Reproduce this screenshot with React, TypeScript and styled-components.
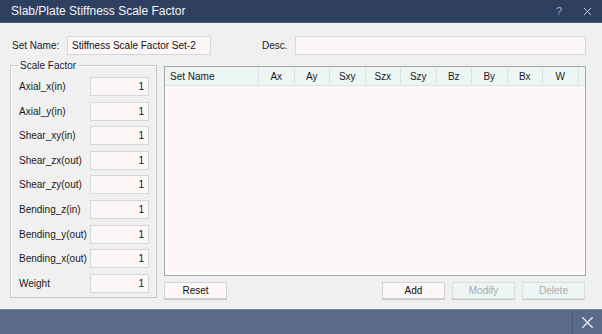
import styled, { createGlobalStyle } from 'styled-components'

const GlobalStyle = createGlobalStyle`
  html, body {
    margin: 0;
    padding: 0;
    background: #f0f0f0;
  }
  body {
    font-family: "Liberation Sans", Arial, sans-serif;
    font-size: 10px;
    color: #1a1a1a;
  }
`

const Window = styled.div`
  width: 602px;
  height: 334px;
  display: flex;
  flex-direction: column;
  background: #f0f0f0;
  overflow: hidden;
`

const TitleBar = styled.div`
  height: 23px;
  flex: none;
  display: flex;
  align-items: center;
  background: #2f3f5f;
  color: #f4f6fa;
  padding-left: 11px;
  font-size: 12px;
  border-bottom: 1px solid #4a5a78;
  box-sizing: border-box;
`

const Title = styled.div`
  flex: 1;
`

const TitleButton = styled.div<{ $w: number }>`
  width: ${(p) => p.$w}px;
  display: flex;
  justify-content: center;
  align-items: center;
  color: #a8b2c4;
  font-size: 11px;
`

const Body = styled.div`
  flex: 1;
  display: flex;
  flex-direction: column;
  padding: 12px 16px 0 12px;
`

const TopRow = styled.div`
  display: flex;
  align-items: center;
  height: 20px;
`

const Label = styled.span<{ $w?: number; $ml?: number }>`
  width: ${(p) => (p.$w ? `${p.$w}px` : 'auto')};
  margin-left: ${(p) => p.$ml || 0}px;
  flex: none;
  white-space: nowrap;
`

const TextBox = styled.div<{ $w?: number; $align?: string }>`
  height: 19px;
  box-sizing: border-box;
  width: ${(p) => (p.$w ? `${p.$w}px` : 'auto')};
  flex: ${(p) => (p.$w ? 'none' : '1')};
  background: #fdf6f6;
  border: 1px solid #d4d8dc;
  display: flex;
  align-items: center;
  justify-content: ${(p) => p.$align || 'flex-start'};
  padding: 0 4px;
  color: #111;
  white-space: nowrap;
`

const Main = styled.div`
  display: flex;
  margin-top: 10px;
  gap: 7px;
`

const FieldSet = styled.fieldset`
  width: 147px;
  height: 238px;
  box-sizing: border-box;
  margin: -5px 0 0 -2px;
  padding: 6px 7px 0 8px;
  border: 1px solid #c4c8cc;
  box-shadow: inset 1px 1px 0 #fff;
  display: flex;
  flex-direction: column;
  gap: 5.6px;
`

const Legend = styled.legend`
  padding: 0 2px;
  margin-left: -1px;
  color: #1a1a1a;
`

const FactorRow = styled.div`
  display: flex;
  align-items: center;
  height: 19px;
`

const RightCol = styled.div`
  flex: 1;
  display: flex;
  flex-direction: column;
  margin-top: 1px;
`

const Table = styled.div`
  height: 210px;
  box-sizing: border-box;
  border: 1px solid #a4a8ac;
  background: #fdf7f7;
`

const HeaderRow = styled.div`
  display: flex;
  height: 18px;
  background: #eef6f5;
  border-bottom: 1px solid #dde4e4;
`

const HeaderCell = styled.div<{ $w: number; $left?: boolean }>`
  width: ${(p) => p.$w}px;
  flex: none;
  box-sizing: border-box;
  display: flex;
  align-items: center;
  justify-content: ${(p) => (p.$left ? 'flex-start' : 'center')};
  padding-left: ${(p) => (p.$left ? '5px' : '0')};
  border-right: 1px solid #dce2e2;
  color: #1a1a1a;
`

const ButtonRow = styled.div`
  display: flex;
  margin-top: 6px;
  gap: 7px;
`

const Button = styled.div<{ $disabled?: boolean; $ml?: string }>`
  width: 63px;
  height: 17px;
  box-sizing: border-box;
  display: flex;
  align-items: center;
  justify-content: center;
  margin-left: ${(p) => p.$ml || '0'};
  background: ${(p) => (p.$disabled ? '#eef5f5' : '#fdf7f7')};
  border: 1px solid ${(p) => (p.$disabled ? '#d8dede' : '#cfd3d6')};
  box-shadow: 0 1px 0 #c8cacc;
  color: ${(p) => (p.$disabled ? '#a8acae' : '#111')};
`

const Footer = styled.div`
  height: 24px;
  flex: none;
  display: flex;
  justify-content: flex-end;
  background: #5a6a8b;
  border-top: 1px solid #7888a6;
`

const FooterClose = styled.div`
  width: 29px;
  display: flex;
  align-items: center;
  justify-content: center;
  border-left: 1px solid #4a5a7a;
`

const factors = [
  'Axial_x(in)',
  'Axial_y(in)',
  'Shear_xy(in)',
  'Shear_zx(out)',
  'Shear_zy(out)',
  'Bending_z(in)',
  'Bending_y(out)',
  'Bending_x(out)',
  'Weight',
]

const columns = ['Ax', 'Ay', 'Sxy', 'Szx', 'Szy', 'Bz', 'By', 'Bx', 'W']

const CloseIcon = ({ size, color }: { size: number; color: string }) => (
  <svg width={size} height={size} viewBox="0 0 10 10">
    <path d="M1 1 L9 9 M9 1 L1 9" stroke={color} strokeWidth="1.1" fill="none" />
  </svg>
)

export default function App() {
  return (
    <>
      <GlobalStyle />
      <Window>
        <TitleBar>
          <Title>Slab/Plate Stiffness Scale Factor</Title>
          <TitleButton $w={26}>?</TitleButton>
          <TitleButton $w={30}>
            <CloseIcon size={9} color="#c8d0dc" />
          </TitleButton>
        </TitleBar>
        <Body>
          <TopRow>
            <Label $w={55}>Set Name:</Label>
            <TextBox $w={144}>Stiffness Scale Factor Set-2</TextBox>
            <Label $w={33} $ml={51}>Desc.</Label>
            <TextBox />
          </TopRow>
          <Main>
            <FieldSet>
              <Legend>Scale Factor</Legend>
              {factors.map((f) => (
                <FactorRow key={f}>
                  <Label $w={71}>{f}</Label>
                  <TextBox $w={59} $align="flex-end">1</TextBox>
                </FactorRow>
              ))}
            </FieldSet>
            <RightCol>
              <Table>
                <HeaderRow>
                  <HeaderCell $w={94} $left>Set Name</HeaderCell>
                  {columns.map((c) => (
                    <HeaderCell key={c} $w={35.5}>{c}</HeaderCell>
                  ))}
                </HeaderRow>
              </Table>
              <ButtonRow>
                <Button>Reset</Button>
                <Button $ml="148px">Add</Button>
                <Button $disabled>Modify</Button>
                <Button $disabled>Delete</Button>
              </ButtonRow>
            </RightCol>
          </Main>
        </Body>
        <Footer>
          <FooterClose>
            <CloseIcon size={13} color="#e4e8f0" />
          </FooterClose>
        </Footer>
      </Window>
    </>
  )
}
